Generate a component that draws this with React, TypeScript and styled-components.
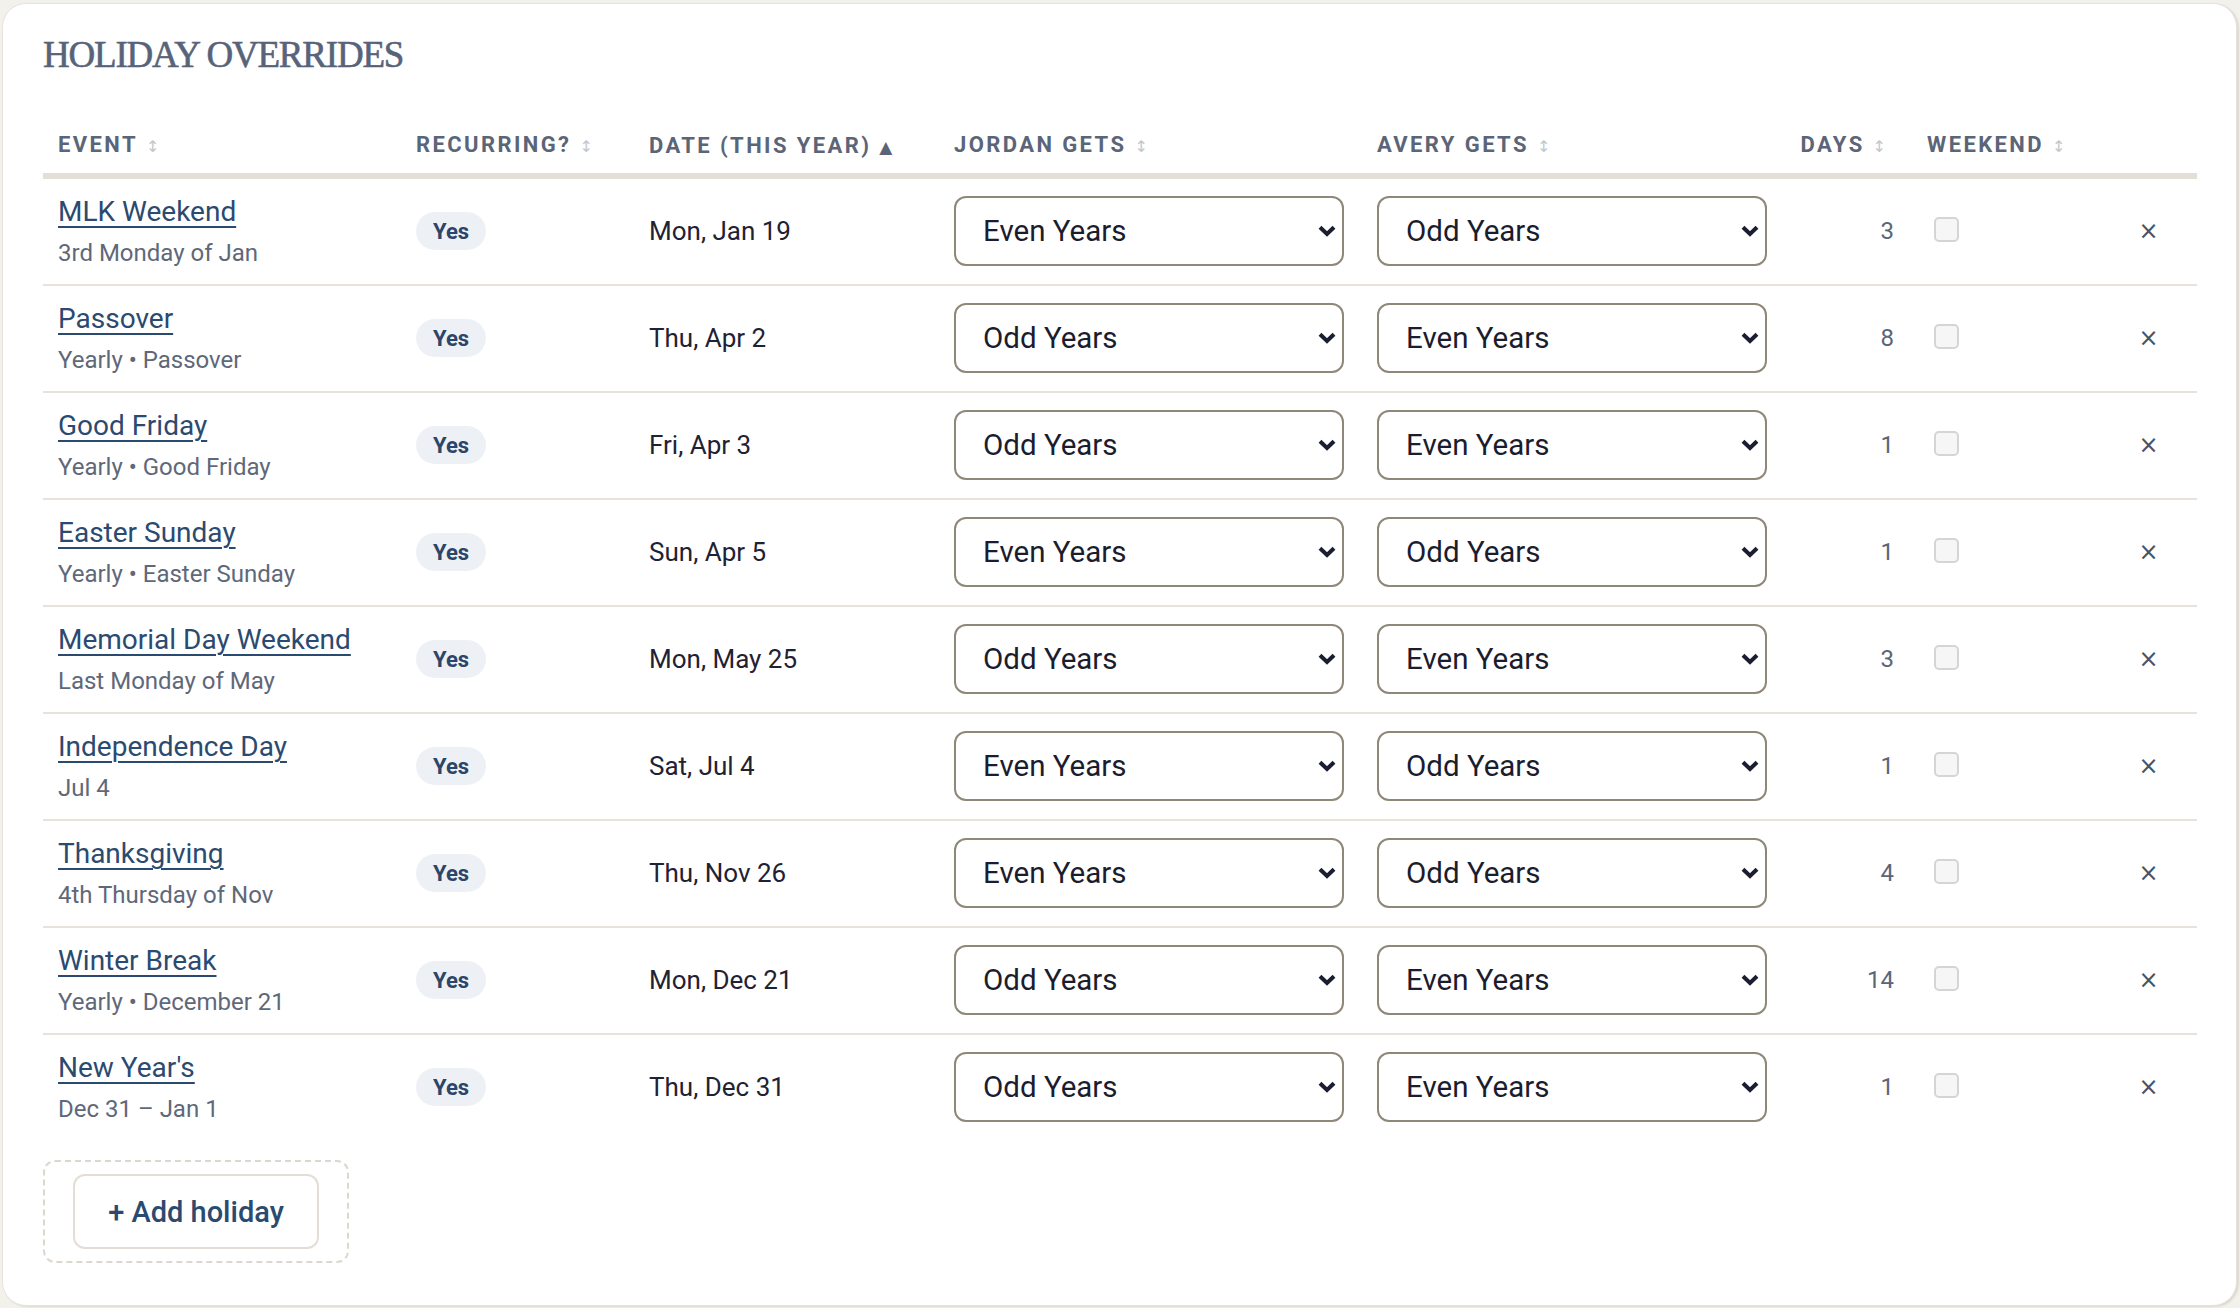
import React from "react";
import styled, { createGlobalStyle } from "styled-components";

type Holiday = {
  name: string;
  rule: string;
  date: string;
  jordan: string;
  avery: string;
  days: number;
};

const holidays: Holiday[] = [
  { name: "MLK Weekend", rule: "3rd Monday of Jan", date: "Mon, Jan 19", jordan: "Even Years", avery: "Odd Years", days: 3 },
  { name: "Passover", rule: "Yearly • Passover", date: "Thu, Apr 2", jordan: "Odd Years", avery: "Even Years", days: 8 },
  { name: "Good Friday", rule: "Yearly • Good Friday", date: "Fri, Apr 3", jordan: "Odd Years", avery: "Even Years", days: 1 },
  { name: "Easter Sunday", rule: "Yearly • Easter Sunday", date: "Sun, Apr 5", jordan: "Even Years", avery: "Odd Years", days: 1 },
  { name: "Memorial Day Weekend", rule: "Last Monday of May", date: "Mon, May 25", jordan: "Odd Years", avery: "Even Years", days: 3 },
  { name: "Independence Day", rule: "Jul 4", date: "Sat, Jul 4", jordan: "Even Years", avery: "Odd Years", days: 1 },
  { name: "Thanksgiving", rule: "4th Thursday of Nov", date: "Thu, Nov 26", jordan: "Even Years", avery: "Odd Years", days: 4 },
  { name: "Winter Break", rule: "Yearly • December 21", date: "Mon, Dec 21", jordan: "Odd Years", avery: "Even Years", days: 14 },
  { name: "New Year's", rule: "Dec 31 – Jan 1", date: "Thu, Dec 31", jordan: "Odd Years", avery: "Even Years", days: 1 },
];

const columns = [
  { label: "EVENT", width: 358, sort: "none" },
  { label: "RECURRING?", width: 233, sort: "none" },
  { label: "DATE (THIS YEAR)", width: 305, sort: "asc" },
  { label: "JORDAN GETS", width: 423, sort: "none" },
  { label: "AVERY GETS", width: 423, sort: "none" },
  { label: "DAYS", width: 127, sort: "none", right: true },
  { label: "WEEKEND", width: 188, sort: "none" },
  { label: "", width: 97, sort: "" },
];

const OwnerSelect = ({ value }: { value: string }) => (
  <SelectWrap>
    <StyledSelect defaultValue={value}>
      <option>Even Years</option>
      <option>Odd Years</option>
      <option>Every Year</option>
    </StyledSelect>
    <Chevron width="18" height="12" viewBox="0 0 18 12">
      <polyline points="2,2.2 9,9 16,2.2" fill="none" stroke="#1b1d33" strokeWidth="4" />
    </Chevron>
  </SelectWrap>
);

const App = () => {
  return (
    <>
      <GlobalStyle />
      <StyledCard>
        <StyledTitle>HOLIDAY OVERRIDES</StyledTitle>
        <StyledTable>
          <colgroup>
            {columns.map((c, i) => (
              <col key={i} style={{ width: c.width }} />
            ))}
          </colgroup>
          <thead>
            <tr>
              {columns.map((c, i) => (
                <StyledTh key={i} $right={c.right}>
                  {c.label}
                  {c.sort === "none" && <SortIcon>↕</SortIcon>}
                  {c.sort === "asc" && <SortActive>▲</SortActive>}
                </StyledTh>
              ))}
            </tr>
          </thead>
          <tbody>
            {holidays.map((h) => (
              <StyledRow key={h.name}>
                <StyledTd>
                  <EventName href="#">{h.name}</EventName>
                  <EventRule>{h.rule}</EventRule>
                </StyledTd>
                <StyledTd>
                  <Badge>Yes</Badge>
                </StyledTd>
                <StyledTd>
                  <DateText>{h.date}</DateText>
                </StyledTd>
                <StyledTd>
                  <OwnerSelect value={h.jordan} />
                </StyledTd>
                <StyledTd>
                  <OwnerSelect value={h.avery} />
                </StyledTd>
                <StyledTd $right>
                  <DaysText>{h.days}</DaysText>
                </StyledTd>
                <StyledTd>
                  <Checkbox type="checkbox" />
                </StyledTd>
                <StyledTd $center>
                  <RemoveButton>×</RemoveButton>
                </StyledTd>
              </StyledRow>
            ))}
          </tbody>
        </StyledTable>
        <AddZone>
          <AddButton>+ Add holiday</AddButton>
        </AddZone>
      </StyledCard>
    </>
  );
};

export default App;

const GlobalStyle = createGlobalStyle`
  html, body {
    margin: 0;
    padding: 0;
    background: #f3f1ec;
    font-family: Roboto, "Liberation Sans", sans-serif;
  }
  * { box-sizing: border-box; }
`;

const StyledCard = styled.section`
  margin: 3px 3px 4px 2px;
  background: #fff;
  border: 1px solid #e7e3dc;
  border-radius: 24px;
  box-shadow: 2px 1px 2px rgba(120, 110, 90, 0.18);
  padding: 27px 39px 42px 40px;
`;

const StyledTitle = styled.h2`
  margin: 0 0 47px;
  font-family: "Liberation Serif", "DejaVu Serif", serif;
  font-weight: 400;
  font-size: 37px;
  line-height: 48px;
  letter-spacing: -1.2px;
  color: #58637a;
  -webkit-text-stroke: 0.6px #58637a;
`;

const StyledTable = styled.table`
  width: 100%;
  border-collapse: collapse;
  table-layout: fixed;
`;

const StyledTh = styled.th<{ $right?: boolean }>`
  padding: 4px ${(p) => (p.$right ? "26px" : "15px")} 11px 15px;
  text-align: ${(p) => (p.$right ? "right" : "left")};
  font-size: 22px;
  line-height: 30px;
  font-weight: 700;
  letter-spacing: 2.4px;
  color: #5b6578;
  white-space: nowrap;
  border-bottom: 6px solid #e3dfd7;
`;

const SortIcon = styled.span`
  margin-left: 8px;
  font-family: "DejaVu Sans", sans-serif;
  font-size: 16px;
  font-weight: 400;
  color: #c3c7ce;
  letter-spacing: 0;
`;

const SortActive = styled.span`
  margin-left: 8px;
  font-family: "DejaVu Sans", sans-serif;
  font-size: 17px;
  color: #5b6578;
  letter-spacing: 0;
`;

const StyledRow = styled.tr`
  border-bottom: 2px solid #e7e3dc;
  &:last-child {
    border-bottom: none;
  }
`;

const StyledTd = styled.td<{ $right?: boolean; $center?: boolean }>`
  padding: 17px ${(p) => (p.$right ? "18px" : "15px")} 18px 15px;
  vertical-align: middle;
  text-align: ${(p) => (p.$right ? "right" : p.$center ? "center" : "left")};
`;

const EventName = styled.a`
  display: block;
  width: fit-content;
  font-size: 28px;
  line-height: 32px;
  color: #2b4a70;
  text-decoration: underline;
  text-decoration-thickness: 2px;
  text-underline-offset: 5px;
  white-space: nowrap;
`;

const EventRule = styled.div`
  margin-top: 12px;
  font-size: 24px;
  line-height: 26px;
  color: #5f6879;
  white-space: nowrap;
`;

const Badge = styled.span`
  display: inline-flex;
  align-items: center;
  height: 38px;
  padding: 0 17px;
  border-radius: 19px;
  background: #edf1f6;
  color: #2c4568;
  font-size: 22px;
  font-weight: 700;
`;

const DateText = styled.span`
  font-size: 26px;
  color: #1f2233;
`;

const SelectWrap = styled.div`
  position: relative;
  width: 390px;
`;

const StyledSelect = styled.select`
  appearance: none;
  display: block;
  width: 100%;
  height: 70px;
  padding: 0 40px 0 27px;
  border: 2px solid #8f8879;
  border-radius: 12px;
  background: #fff;
  font-family: Roboto, "Liberation Sans", sans-serif;
  font-size: 29.5px;
  color: #1b1d2e;
`;

const Chevron = styled.svg`
  position: absolute;
  right: 8px;
  top: 29px;
  pointer-events: none;
`;

const DaysText = styled.span`
  font-size: 24px;
  color: #5b6578;
`;

const Checkbox = styled.input`
  appearance: none;
  display: block;
  width: 25px;
  height: 25px;
  margin: 0 0 4px 7px;
  border: 2px solid #d5d5d5;
  border-radius: 5px;
  background: #f6f6f6;
`;

const RemoveButton = styled.button`
  border: none;
  background: none;
  padding: 0;
  font-family: "DejaVu Sans", sans-serif;
  font-size: 24px;
  color: #4a5364;
  cursor: pointer;
`;

const AddZone = styled.div`
  display: inline-block;
  margin-top: 20px;
  padding: 12px 28px;
  border: 2px dashed #ddd8cf;
  border-radius: 12px;
`;

const AddButton = styled.button`
  display: block;
  width: 246px;
  height: 75px;
  border: 2px solid #e3ded5;
  border-radius: 12px;
  background: #fff;
  font-family: Roboto, "Liberation Sans", sans-serif;
  font-size: 29px;
  font-weight: 500;
  color: #2b4a70;
`;
